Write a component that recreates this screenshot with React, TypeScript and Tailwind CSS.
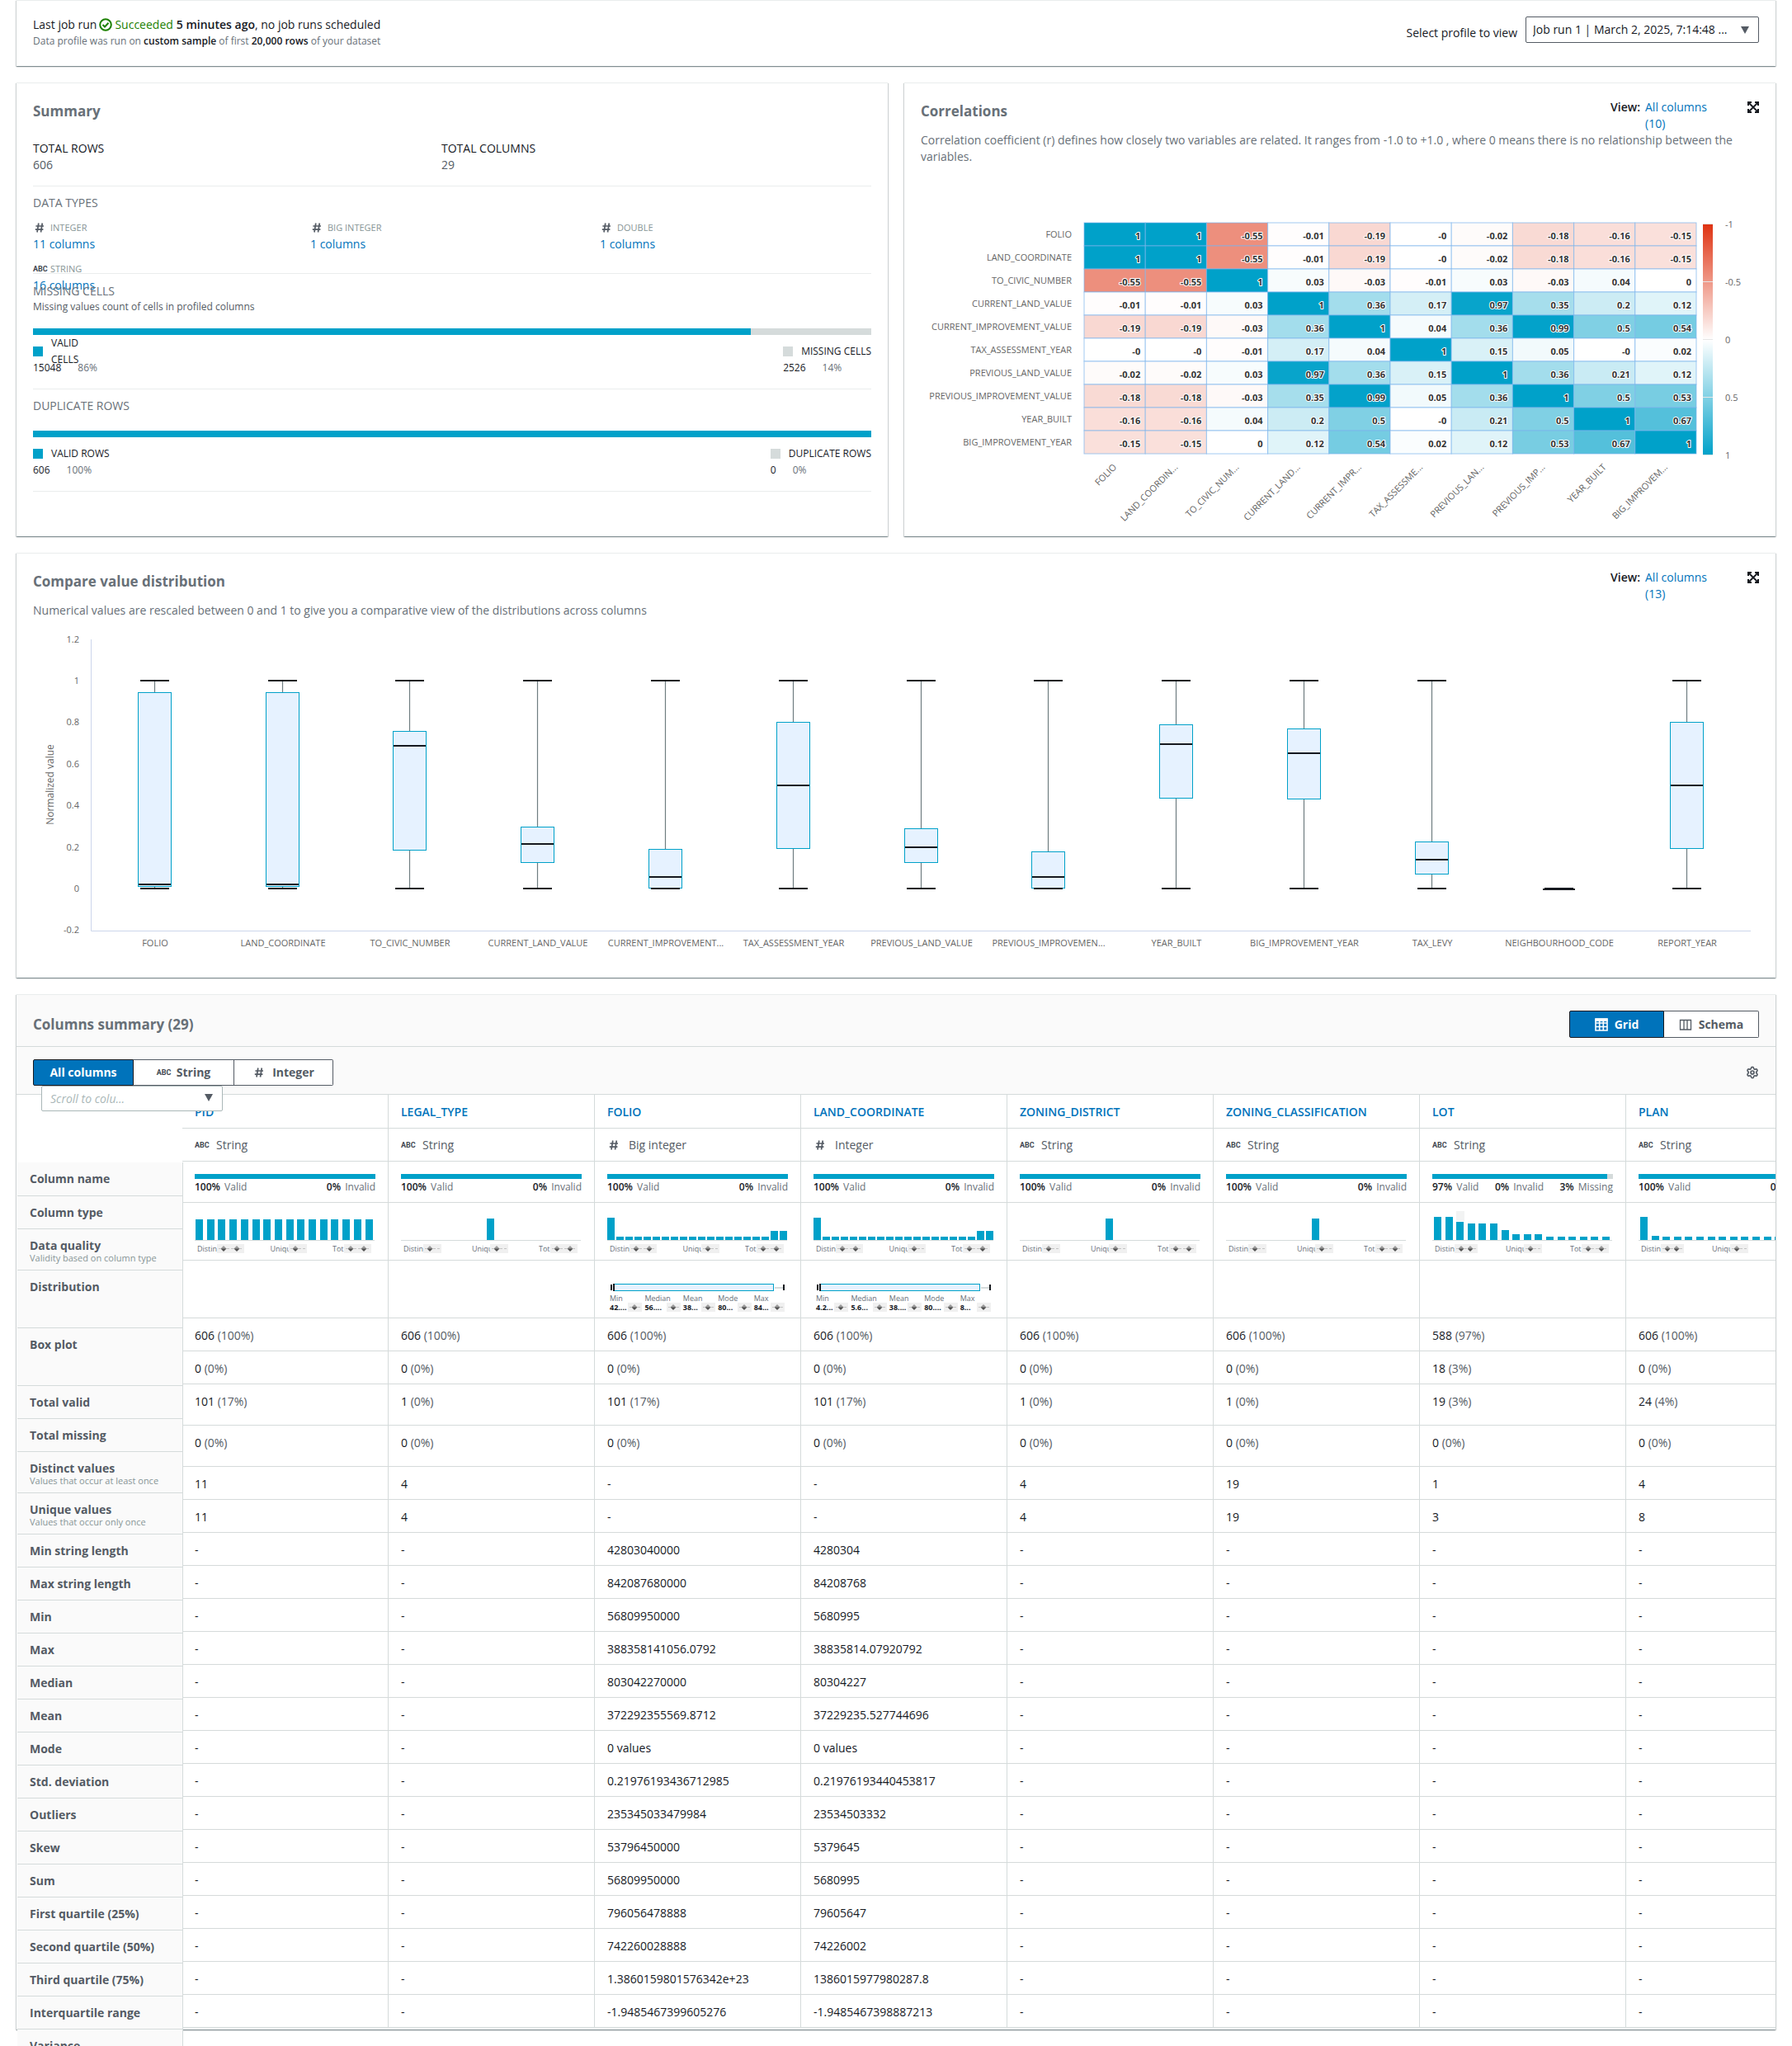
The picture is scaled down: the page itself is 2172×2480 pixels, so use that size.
import React from "react";
import { Settings } from "lucide-react";

const CARD =
  "border-t border-[#eaeded] bg-white shadow-[0_1px_1px_0_rgba(0,28,36,0.3),1px_1px_1px_0_rgba(0,28,36,0.15),-1px_1px_1px_0_rgba(0,28,36,0.15)]";

const BLUE = "#00a1c9";

/* ---------- Icons ---------- */

function HashIcon() {
  return (
    <svg width="16" height="16" viewBox="0 0 16 16" className="shrink-0" aria-hidden="true">
      <path d="M6.8 2.5L5 13.5M11.3 2.5L9.5 13.5M3.4 6H13M2.8 10.2H12.4" stroke="#545b64" strokeWidth="1.7" fill="none" />
    </svg>
  );
}

function AbcIcon() {
  return (
    <span
      aria-hidden="true"
      className="w-4 shrink-0 whitespace-nowrap font-['Liberation_Sans_Narrow','Roboto','Liberation_Sans',sans-serif] text-[9px] leading-5 font-bold text-[#414750]"
    >
      ABC
    </span>
  );
}

function ExpandIcon() {
  return (
    <svg width="14" height="14" viewBox="0 0 14 14" aria-hidden="true">
      <path d="M1 5V1H5M9 1H13V5M13 9V13H9M5 13H1V9" stroke="#16191f" strokeWidth="2" fill="none" />
      <path d="M2 2L12 12M12 2L2 12" stroke="#16191f" strokeWidth="1.8" />
    </svg>
  );
}

function Caret({ className }: { className: string }) {
  return (
    <svg width="10" height="9" viewBox="0 0 10 9" className={className} aria-hidden="true">
      <path d="M0 0H10L5 9Z" fill="#545b64" />
    </svg>
  );
}

/* ---------- Top bar ---------- */

function JobBar() {
  return (
    <section className={`${CARD} flex h-20 items-start justify-between px-5 pt-[19px]`}>
      <div>
        <p className="flex items-center text-sm leading-5">
          Last job run
          <svg width="16" height="16" viewBox="0 0 16 16" className="mx-[3px]" aria-hidden="true">
            <circle cx="8" cy="8" r="6.8" fill="none" stroke="#1d8102" strokeWidth="2" />
            <path d="M4.5 8L7 10.5L11.5 5.8" fill="none" stroke="#1d8102" strokeWidth="2" />
          </svg>
          <span className="mr-1 text-[#1d8102]">Succeeded</span>
          <b className="font-semibold">5 minutes ago</b>, no job runs scheduled
        </p>
        <p className="text-xs leading-5 text-[#687078]">
          Data profile was run on <b className="font-semibold text-[#16191f]">custom sample</b> of first{" "}
          <b className="font-semibold text-[#16191f]">20,000 rows</b> of your dataset
        </p>
      </div>
      <div className="flex items-center">
        <label htmlFor="profile" className="mt-2 mr-2.5 text-sm">
          Select profile to view
        </label>
        <div className="relative">
          <select
            id="profile"
            className="h-8 w-[283px] appearance-none rounded-xs border border-[#545b64] bg-white pr-8 pl-2 text-sm"
          >
            <option>Job run 1 | March 2, 2025, 7:14:48 ...</option>
          </select>
          <Caret className="pointer-events-none absolute top-3 right-3" />
        </div>
      </div>
    </section>
  );
}

/* ---------- Summary ---------- */

function TypeCount({ icon, name, count }: { icon: React.ReactNode; name: string; count: string }) {
  return (
    <div className="h-[50px] text-sm leading-5">
      <div className="flex items-center gap-[5px] text-[11px] leading-5 text-[#879596]">
        {icon}
        {name}
      </div>
      <a href="#columns" className="text-[#0073bb]">
        {count}
      </a>
    </div>
  );
}

function Legend({ color, label, value, pct, narrow }: { color: string; label: string; value: string; pct: string; narrow?: boolean }) {
  return (
    <div className="text-xs leading-5">
      <div className="flex h-5 items-center gap-2.5">
        <span className={`size-3 shrink-0 ${color}`} />
        <span className={narrow ? "w-10" : ""}>{label}</span>
      </div>
      <div className="flex h-5 gap-5">
        <span>{value}</span>
        <span className="text-[#687078]">{pct}</span>
      </div>
    </div>
  );
}

const VALID_CELLS = 15048;
const MISSING_CELLS = 2526;

function Summary() {
  return (
    <section className={`${CARD} h-[550px] px-5 pt-[19px]`}>
      <h2 className="h-[50px] text-[17px] leading-[30px] font-bold text-[#687078]">Summary</h2>
      <div className="grid h-14 grid-cols-[495fr_521fr] border-b border-[#eaeded] text-sm leading-5">
        <div>
          <div>TOTAL ROWS</div>
          <div className="text-[#545b64]">606</div>
        </div>
        <div>
          <div>TOTAL COLUMNS</div>
          <div className="text-[#545b64]">29</div>
        </div>
      </div>
      <div className="h-[106px] border-b border-[#eaeded] pt-2.5">
        <h3 className="mb-2.5 text-sm leading-5 text-[#687078]">DATA TYPES</h3>
        <div className="grid grid-cols-[336fr_351fr_329fr]">
          <TypeCount icon={<HashIcon />} name="INTEGER" count="11 columns" />
          <TypeCount icon={<HashIcon />} name="BIG INTEGER" count="1 columns" />
          <TypeCount icon={<HashIcon />} name="DOUBLE" count="1 columns" />
          <TypeCount icon={<AbcIcon />} name="STRING" count="16 columns" />
        </div>
      </div>
      <div className="h-[140px] border-b border-[#eaeded] pt-3">
        <h3 className="text-sm leading-[18px] text-[#687078]">MISSING CELLS</h3>
        <p className="mb-4 text-xs leading-5 text-[#545b64]">Missing values count of cells in profiled columns</p>
        <div className="mb-2.5 flex h-2">
          <div className="bg-[#00a1c9]" style={{ width: `${(100 * VALID_CELLS) / (VALID_CELLS + MISSING_CELLS)}%` }} />
          <div className="flex-1 bg-[#d5dbdb]" />
        </div>
        <div className="flex justify-between">
          <Legend color="bg-[#00a1c9]" label="VALID CELLS" value={`${VALID_CELLS}`} pct="86%" narrow />
          <Legend color="bg-[#d5dbdb]" label="MISSING CELLS" value={`${MISSING_CELLS}`} pct="14%" />
        </div>
      </div>
      <div className="h-[124px] border-b border-[#eaeded] pt-2.5">
        <h3 className="mb-5 text-sm leading-5 text-[#687078]">DUPLICATE ROWS</h3>
        <div className="mb-2.5 h-2 bg-[#00a1c9]" />
        <div className="flex justify-between">
          <Legend color="bg-[#00a1c9]" label="VALID ROWS" value="606" pct="100%" />
          <Legend color="bg-[#d5dbdb]" label="DUPLICATE ROWS" value="0" pct="0%" />
        </div>
      </div>
    </section>
  );
}

/* ---------- Shared chart header ---------- */

function ChartHeader({ title, count }: { title: string; count: string }) {
  return (
    <div className="flex h-[50px] items-start">
      <h2 className="flex-1 text-[17px] leading-[30px] font-bold text-[#687078]">{title}</h2>
      <span className="mr-1.5 text-sm leading-5 font-semibold">View:</span>
      <a href="#view" className="mr-[38px] w-[86px] text-sm leading-5 text-[#0073bb]">
        All columns {count}
      </a>
      <button type="button" aria-label={`Expand ${title}`} className="mt-[3px] flex">
        <ExpandIcon />
      </button>
    </div>
  );
}

/* ---------- Correlations ---------- */

const CORR_NAMES = [
  "FOLIO", "LAND_COORDINATE", "TO_CIVIC_NUMBER", "CURRENT_LAND_VALUE", "CURRENT_IMPROVEMENT_VALUE",
  "TAX_ASSESSMENT_YEAR", "PREVIOUS_LAND_VALUE", "PREVIOUS_IMPROVEMENT_VALUE", "YEAR_BUILT", "BIG_IMPROVEMENT_YEAR",
];
const CORR_SHORT = [
  "FOLIO", "LAND_COORDIN...", "TO_CIVIC_NUM...", "CURRENT_LAND...", "CURRENT_IMPR...",
  "TAX_ASSESSME...", "PREVIOUS_LAN...", "PREVIOUS_IMP...", "YEAR_BUILT", "BIG_IMPROVEM...",
];
const CORR = [
  "1 1 -0.55 -0.01 -0.19 -0 -0.02 -0.18 -0.16 -0.15",
  "1 1 -0.55 -0.01 -0.19 -0 -0.02 -0.18 -0.16 -0.15",
  "-0.55 -0.55 1 0.03 -0.03 -0.01 0.03 -0.03 0.04 0",
  "-0.01 -0.01 0.03 1 0.36 0.17 0.97 0.35 0.2 0.12",
  "-0.19 -0.19 -0.03 0.36 1 0.04 0.36 0.99 0.5 0.54",
  "-0 -0 -0.01 0.17 0.04 1 0.15 0.05 -0 0.02",
  "-0.02 -0.02 0.03 0.97 0.36 0.15 1 0.36 0.21 0.12",
  "-0.18 -0.18 -0.03 0.35 0.99 0.05 0.36 1 0.5 0.53",
  "-0.16 -0.16 0.04 0.2 0.5 -0 0.21 0.5 1 0.67",
  "-0.15 -0.15 0 0.12 0.54 0.02 0.12 0.53 0.67 1",
].map((r) => r.split(" "));

function heat(text: string) {
  const v = Number(text);
  const end = v < 0 ? [223, 51, 18] : [0, 161, 201];
  const t = Math.abs(v);
  const [r, g, b] = end.map((c) => Math.round(255 + (c - 255) * t));
  return `rgb(${r},${g},${b})`;
}

function Heatmap() {
  const x0 = 198;
  const y0 = 60;
  const cw = 74.2;
  const ch = 28;
  return (
    <svg viewBox="0 0 1016 430" className="block h-auto w-full" role="img" aria-label="Correlation heat map">
      <defs>
        <linearGradient id="scale" x1="0" y1="0" x2="0" y2="1">
          <stop offset="0" stopColor="#df3312" />
          <stop offset="0.5" stopColor="#ffffff" />
          <stop offset="1" stopColor={BLUE} />
        </linearGradient>
      </defs>
      {CORR.map((row, r) =>
        row.map((v, c) => (
          <rect
            key={`${r}-${c}`}
            x={x0 + c * cw}
            y={y0 + r * ch}
            width={cw}
            height={ch}
            fill={heat(v)}
            stroke="#7cb5ec"
            strokeOpacity="0.7"
          />
        )),
      )}
      {CORR.map((row, r) =>
        row.map((v, c) => (
          <text
            key={`${r}-${c}`}
            x={x0 + (c + 1) * cw - 6}
            y={y0 + r * ch + 20}
            textAnchor="end"
            fontSize="11"
            fontWeight="700"
            fill="#333333"
            stroke="#ffffff"
            strokeWidth="2"
            strokeLinejoin="round"
            paintOrder="stroke"
          >
            {v}
          </text>
        )),
      )}
      {CORR_NAMES.map((n, i) => (
        <text key={n} x={x0 - 15} y={y0 + i * ch + 18} textAnchor="end" fontSize="11" fill="#666666">
          {n}
        </text>
      ))}
      {CORR_SHORT.map((n, i) => {
        const x = x0 + i * cw + 40;
        return (
          <text key={n} x={x} y="357" textAnchor="end" fontSize="11" fill="#666666" transform={`rotate(-45 ${x} 357)`}>
            {n}
          </text>
        );
      })}
      <rect x="948" y="62" width="12" height="280" fill="url(#scale)" />
      {["-1", "-0.5", "0", "0.5", "1"].map((t, i) => (
        <g key={t}>
          <rect x="948" y={61 + i * 70} width="12" height="1" fill="#e6e6e6" />
          <text x="975" y={66 + i * 70} fontSize="11" fill="#666666">
            {t}
          </text>
        </g>
      ))}
    </svg>
  );
}

function Correlations() {
  return (
    <section className={`${CARD} h-[550px] px-5 pt-[19px]`}>
      <ChartHeader title="Correlations" count="(10)" />
      <p className="mt-[-10px] mb-2.5 min-h-10 pr-6 text-sm leading-5 text-[#687078]">
        Correlation coefficient (r) defines how closely two variables are related. It ranges from -1.0 to +1.0 , where 0 means there is
        no relationship between the variables.
      </p>
      <Heatmap />
    </section>
  );
}

/* ---------- Value distribution ---------- */

type Box = [name: string, q1: number, median: number, q3: number];
const BOXES: Box[] = [
  ["FOLIO", 0.01, 0.018, 0.943],
  ["LAND_COORDINATE", 0.01, 0.018, 0.943],
  ["TO_CIVIC_NUMBER", 0.185, 0.687, 0.757],
  ["CURRENT_LAND_VALUE", 0.128, 0.216, 0.297],
  ["CURRENT_IMPROVEMENT...", 0.005, 0.056, 0.19],
  ["TAX_ASSESSMENT_YEAR", 0.196, 0.497, 0.801],
  ["PREVIOUS_LAND_VALUE", 0.128, 0.198, 0.288],
  ["PREVIOUS_IMPROVEMEN...", 0.005, 0.056, 0.18],
  ["YEAR_BUILT", 0.438, 0.695, 0.788],
  ["BIG_IMPROVEMENT_YEAR", 0.434, 0.651, 0.768],
  ["TAX_LEVY", 0.07, 0.139, 0.226],
  ["NEIGHBOURHOOD_CODE", 0, 0, 0],
  ["REPORT_YEAR", 0.196, 0.497, 0.801],
];

function BoxPlots() {
  const left = 70;
  const right = 2082;
  const pitch = (right - left) / BOXES.length;
  const y = (v: number) => Math.round(317 - v * 252);
  return (
    <svg viewBox="0 0 2092 405" className="block h-auto w-full" role="img" aria-label="Box plots of normalized values">
      <path d={`M${left + 0.5} 15V368.5H${right}`} fill="none" stroke="#ccd6eb" />
      {[1.2, 1, 0.8, 0.6, 0.4, 0.2, 0, -0.2].map((t) => (
        <text key={t} x="56" y={y(t) + 4} textAnchor="end" fontSize="11" fill="#666666">
          {t}
        </text>
      ))}
      <text x="25" y="191" textAnchor="middle" fontSize="12" fill="#666666" transform="rotate(-90 25 191)">
        Normalized value
      </text>
      {BOXES.map(([name, q1, med, q3], i) => {
        const cx = Math.floor(left + pitch * (i + 0.5));
        const flat = q3 === 0;
        return (
          <g key={name}>
            {!flat && (
              <>
                <path d={`M${cx + 0.5} ${y(1)}V${y(0)}`} stroke="#6f7d80" strokeWidth="1.2" />
                <rect
                  x={cx - 19.5}
                  y={y(q3) + 0.5}
                  width="40"
                  height={y(q1) - y(q3)}
                  fill="#e6f2ff"
                  stroke={BLUE}
                />
                <path d={`M${cx - 17} ${y(1)}H${cx + 18}`} stroke="#16191f" strokeWidth="2" />
              </>
            )}
            <path d={`M${cx - 17} ${y(0)}H${cx + 18}`} stroke="#16191f" strokeWidth="2" />
            <path d={`M${cx - 19} ${flat ? y(0) + 1 : y(med)}H${cx + 20}`} stroke="#16191f" strokeWidth="2" />
            <text x={cx + 1} y="387" textAnchor="middle" fontSize="11" fill="#666666">
              {name}
            </text>
          </g>
        );
      })}
    </svg>
  );
}

function Distribution() {
  return (
    <section className={`${CARD} h-[515px] px-5 pt-[19px]`}>
      <ChartHeader title="Compare value distribution" count="(13)" />
      <p className="mt-[-10px] mb-2.5 text-sm leading-5 text-[#687078]">
        Numerical values are rescaled between 0 and 1 to give you a comparative view of the distributions across columns
      </p>
      <BoxPlots />
    </section>
  );
}

/* ---------- Columns summary ---------- */

type Kind = "String" | "Big integer" | "Integer";
interface Column {
  name: string;
  kind: Kind;
  valid: number;
  missing: number;
  bars: number[];
  barStart: number;
  pitch: number;
  spinners: "wide" | "one" | "tight";
  values: string[];
  box?: string[];
}

const many = (n: number, v: number) => Array<number>(n).fill(v);
const dashes = Array<string>(15).fill("-");
const full = { valid: 100, missing: 0 };

const COLUMNS: Column[] = [
  { name: "PID", kind: "String", ...full, bars: many(16, 25), barStart: 1, pitch: 13.7, spinners: "wide",
    values: ["606 (100%)", "0 (0%)", "101 (17%)", "0 (0%)", "11", "11", ...dashes] },
  { name: "LEGAL_TYPE", kind: "String", ...full, bars: [26], barStart: 104, pitch: 0, spinners: "one",
    values: ["606 (100%)", "0 (0%)", "1 (0%)", "0 (0%)", "4", "4", ...dashes] },
  { name: "FOLIO", kind: "Big integer", ...full, bars: [27, ...many(17, 4), 11, 11], barStart: 0, pitch: 11, spinners: "wide",
    values: ["606 (100%)", "0 (0%)", "101 (17%)", "0 (0%)", "-", "-", "42803040000", "842087680000", "56809950000", "388358141056.0792",
      "803042270000", "372292355569.8712", "0 values", "0.21976193436712985", "235345033479984", "53796450000", "56809950000",
      "796056478888", "742260028888", "1.3860159801576342e+23", "-1.9485467399605276"],
    box: ["42....", "56....", "38...", "80...", "84..."] },
  { name: "LAND_COORDINATE", kind: "Integer", ...full, bars: [27, ...many(17, 4), 11, 11], barStart: 0, pitch: 11, spinners: "wide",
    values: ["606 (100%)", "0 (0%)", "101 (17%)", "0 (0%)", "-", "-", "4280304", "84208768", "5680995", "38835814.07920792",
      "80304227", "37229235.527744696", "0 values", "0.21976193440453817", "23534503332", "5379645", "5680995",
      "79605647", "74226002", "1386015977980287.8", "-1.9485467398887213"],
    box: ["4.2...", "5.6...", "38....", "80....", "8..."] },
  { name: "ZONING_DISTRICT", kind: "String", ...full, bars: [26], barStart: 104, pitch: 0, spinners: "one",
    values: ["606 (100%)", "0 (0%)", "1 (0%)", "0 (0%)", "4", "4", ...dashes] },
  { name: "ZONING_CLASSIFICATION", kind: "String", ...full, bars: [26], barStart: 104, pitch: 0, spinners: "one",
    values: ["606 (100%)", "0 (0%)", "1 (0%)", "0 (0%)", "19", "19", ...dashes] },
  { name: "LOT", kind: "String", valid: 97, missing: 3, bars: [28, 28, 22, 20, 20, 20, 12, 7, 7, 7, ...many(6, 4)], barStart: 2, pitch: 13.6,
    spinners: "tight", values: ["588 (97%)", "18 (3%)", "19 (3%)", "0 (0%)", "1", "3", ...dashes] },
  { name: "PLAN", kind: "String", ...full, bars: [28, 5, ...many(14, 4)], barStart: 2, pitch: 13.6, spinners: "tight",
    values: ["606 (100%)", "0 (0%)", "24 (4%)", "0 (0%)", "4", "8", ...dashes] },
];

const CELL = "border-r border-b border-[#d5dbdb] px-[15px] text-left align-top";

function Spinners({ width, at }: { width: number; at: number[] }) {
  return (
    <svg width={width} height="11" viewBox={`0 0 ${width} 11`} className="shrink-0" aria-hidden="true">
      <rect width={width} height="11" fill="#f0f0f0" />
      <path d={`M2 5.5H${width - 2}`} stroke="#c4c4c4" strokeDasharray="13 2" />
      {at.map((x) => (
        <g key={x}>
          <path d={`M${x - 3} 5L${x} 2L${x + 3} 5Z`} fill="#9a9a9a" />
          <path d={`M${x - 3} 6L${x} 9L${x + 3} 6Z`} fill="#505050" />
          <path d={`M${x - 3} 5.5H${x + 3}`} stroke="#777777" />
        </g>
      ))}
    </svg>
  );
}

function Share({ value, label }: { value: number; label: string }) {
  return (
    <span>
      <b className="mr-0.5 font-semibold text-[#16191f]">{value}%</b> {label}
    </span>
  );
}

function Quality({ col }: { col: Column }) {
  return (
    <>
      <div className="flex h-1.5">
        <div className="bg-[#00a1c9]" style={{ width: `${col.valid}%` }} />
        <div className="flex-1 bg-[#d5dbdb]" />
      </div>
      <div className="flex justify-between text-xs leading-5 text-[#687078]">
        <Share value={col.valid} label="Valid" />
        <Share value={0} label="Invalid" />
        {col.missing > 0 && <Share value={col.missing} label="Missing" />}
      </div>
    </>
  );
}

function Histogram({ col }: { col: Column }) {
  return (
    <>
      <svg width="218" height="36" viewBox="0 0 218 36" className="block" aria-hidden="true">
        {col.name === "LOT" && <rect x="29" y="0" width="10" height="12" fill="#f2f3f3" />}
        {col.bars.map((h, i) => (
          <rect key={i} x={Math.round(col.barStart + i * col.pitch)} y={35 - h} width="9" height={h} fill={BLUE} />
        ))}
        <rect x="0" y="35" width="218" height="1" fill="#d5dbdb" />
      </svg>
      <div className="mt-[3px] flex items-center justify-between pr-[5px] pl-[3px] text-[9px] leading-[13px] text-[#687078]">
        <span className="flex items-center">
          <span className="w-6 overflow-hidden whitespace-nowrap">Distin</span>
          {col.spinners === "wide" && <Spinners width={33} at={[8, 24]} />}
          {col.spinners === "one" && <Spinners width={22} at={[8]} />}
          {col.spinners === "tight" && <Spinners width={28} at={[8, 19]} />}
        </span>
        <span className="flex items-center">
          <span className="w-[22px] overflow-hidden whitespace-nowrap">Uniqu</span>
          <Spinners width={22} at={[8]} />
        </span>
        <span className="flex items-center">
          <span className="w-3.5 overflow-hidden whitespace-nowrap">Tot</span>
          <Spinners width={33} at={[8, 24]} />
        </span>
      </div>
    </>
  );
}

const STAT_NAMES = ["Min", "Median", "Mean", "Mode", "Max"];

function MiniBox({ stats }: { stats: string[] }) {
  return (
    <>
      <svg width="219" height="9" viewBox="0 0 219 9" className="block" aria-hidden="true">
        <path d="M203 5H213" stroke="#d5dbdb" strokeWidth="2" />
        <rect x="8.5" y="0.5" width="193" height="8" fill="#e6f2ff" stroke={BLUE} />
        <path d="M5 1V8M214 1V8" stroke="#16191f" strokeWidth="2" />
        <path d="M8 0V9" stroke="#16191f" strokeWidth="2" />
      </svg>
      <div className="mt-[3px] grid grid-cols-[39fr_43fr_39fr_40fr_37fr] gap-x-[3px] pr-1 pl-[3px] text-[9px] leading-[11px]">
        {STAT_NAMES.map((n, i) => (
          <div key={n} className="min-w-0">
            <div className="text-[#687078]">{n}</div>
            <div className="flex items-center justify-between">
              <b className="w-[22px] font-bold whitespace-nowrap">{stats[i]}</b>
              <Spinners width={17} at={[8]} />
            </div>
          </div>
        ))}
      </div>
    </>
  );
}

function CellValue({ text }: { text: string }) {
  const cut = text.indexOf(" (");
  if (cut < 0) return <>{text}</>;
  return (
    <>
      {text.slice(0, cut)}
      <span className="text-[#545b64]">{text.slice(cut)}</span>
    </>
  );
}

const LABELS: [string, string, string?][] = [
  ["Column name", "h-[41px]"],
  ["Column type", "h-10"],
  ["Data quality", "h-[50px]", "Validity based on column type"],
  ["Distribution", "h-[70px]"],
  ["Box plot", "h-[70px]"],
  ["Total valid", "h-10"],
  ["Total missing", "h-10"],
  ["Distinct values", "h-[50px]", "Values that occur at least once"],
  ["Unique values", "h-[50px]", "Values that occur only once"],
  ...[
    "Min string length", "Max string length", "Min", "Max", "Median", "Mean", "Mode", "Std. deviation", "Outliers", "Skew", "Sum",
    "First quartile (25%)", "Second quartile (50%)", "Third quartile (75%)", "Interquartile range", "Variance",
  ].map((n): [string, string] => [n, "h-10"]),
];

function LabelTable() {
  return (
    <table className="relative z-10 mt-[82px] -mr-px mb-[-60px] ml-px w-[201px] shrink-0 table-fixed border-separate border-spacing-0 bg-[#fafafa]">
      <tbody>
        {LABELS.map(([name, height, hint]) => (
          <tr key={name}>
            <th
              scope="row"
              className={`${height} border-r border-b border-[#d5dbdb] pt-2.5 pl-[15px] text-left align-top text-sm leading-5 font-bold whitespace-nowrap text-[#545b64]`}
            >
              {name}
              {hint && <div className="text-[11px] leading-[10px] font-normal text-[#879596]">{hint}</div>}
            </th>
          </tr>
        ))}
      </tbody>
    </table>
  );
}

function DataTable() {
  return (
    <div className="min-w-0 flex-1 overflow-hidden">
      <table className="w-[2000px] table-fixed border-separate border-spacing-0 text-sm leading-5">
        <thead>
          <tr>
            {COLUMNS.map((c) => (
              <th key={c.name} scope="col" className={`${CELL} h-[41px] pt-[11px] font-semibold`}>
                <a href="#columns" className="text-[#0073bb]">
                  {c.name}
                </a>
              </th>
            ))}
          </tr>
        </thead>
        <tbody>
          <tr>
            {COLUMNS.map((c) => (
              <td key={c.name} className={`${CELL} h-10 pt-2.5 text-[#545b64]`}>
                <div className="flex items-center gap-2.5">
                  {c.kind === "String" ? <AbcIcon /> : <HashIcon />}
                  {c.kind}
                </div>
              </td>
            ))}
          </tr>
          <tr>
            {COLUMNS.map((c) => (
              <td key={c.name} className={`${CELL} h-[50px] pt-[15px]`}>
                <Quality col={c} />
              </td>
            ))}
          </tr>
          <tr>
            {COLUMNS.map((c) => (
              <td key={c.name} className={`${CELL} h-[70px] pt-2.5`}>
                <Histogram col={c} />
              </td>
            ))}
          </tr>
          <tr>
            {COLUMNS.map((c) => (
              <td key={c.name} className={`${CELL} h-[70px] pt-7`}>
                {c.box && <MiniBox stats={c.box} />}
              </td>
            ))}
          </tr>
          {COLUMNS[0].values.map((_, r) => (
            <tr key={r}>
              {COLUMNS.map((c) => (
                <td key={c.name} className={`${CELL} pt-[11px] ${r === 2 || r === 3 ? "h-[50px]" : "h-10"}`}>
                  <CellValue text={c.values[r]} />
                </td>
              ))}
            </tr>
          ))}
        </tbody>
      </table>
    </div>
  );
}

function ColumnsSummary() {
  return (
    <section id="columns" className={`${CARD} pb-0.5`}>
      <div className="flex h-[63px] items-start justify-between border-b border-[#d5dbdb] bg-[#fafafa] px-5 pt-[19px]">
        <h2 className="text-[17px] leading-[33px] font-bold text-[#687078]">Columns summary (29)</h2>
        <div className="flex h-[33px] text-sm font-bold">
          <button
            type="button"
            className="flex w-[115px] items-center justify-center gap-2 rounded-l-xs border border-[#16191f] bg-[#0073bb] text-white"
          >
            <svg width="16" height="16" viewBox="0 0 16 16" aria-hidden="true">
              <path d="M1 1H15V15H1ZM1 6H15M1 10.5H15M5.7 4V15M10.3 4V15" fill="none" stroke="#ffffff" strokeWidth="1.6" />
              <rect x="0.5" y="0.5" width="15" height="3.5" fill="#ffffff" />
            </svg>
            Grid
          </button>
          <button
            type="button"
            className="flex w-[115px] items-center justify-center gap-2 rounded-r-xs border border-l-0 border-[#545b64] bg-white text-[#545b64]"
          >
            <svg width="16" height="16" viewBox="0 0 16 16" aria-hidden="true">
              <path d="M1.5 2.5H14.5V14H1.5ZM6 2.5V14M10 2.5V14" fill="none" stroke="#545b64" strokeWidth="1.3" />
            </svg>
            Schema
          </button>
        </div>
      </div>
      <div className="relative flex h-[58px] items-start justify-between border-b border-[#d5dbdb] bg-[#fafafa] px-5 pt-[15px]">
        <div className="flex h-8 text-sm font-bold text-[#545b64]">
          <button type="button" className="w-[122px] rounded-l-xs border border-[#16191f] bg-[#0073bb] text-white">
            All columns
          </button>
          <button type="button" className="flex w-[122px] items-center justify-center gap-2 border-y border-r border-[#545b64] bg-white">
            <AbcIcon />
            String
          </button>
          <button
            type="button"
            className="flex w-[120px] items-center justify-center gap-2 rounded-r-xs border border-l-0 border-[#545b64] bg-white"
          >
            <HashIcon />
            Integer
          </button>
        </div>
        <button type="button" aria-label="Preferences" className="mt-2">
          <Settings size={16} color="#545b64" strokeWidth={2.5} />
        </button>
        <div className="absolute top-[47px] left-[30px] z-20">
          <select
            aria-label="Scroll to column"
            className="block h-[31px] w-[220px] appearance-none rounded-xs border border-[#aab7b8] bg-white pr-8 pl-2.5 text-sm text-[#aab7b8] italic"
          >
            <option>Scroll to colu...</option>
          </select>
          <Caret className="pointer-events-none absolute top-2.5 right-3" />
        </div>
      </div>
      <div className="flex items-start">
        <LabelTable />
        <DataTable />
      </div>
    </section>
  );
}

export default function App() {
  return (
    <main className="flex flex-col gap-5 overflow-hidden bg-white px-5 pb-5 font-['Open_Sans','Noto_Sans',sans-serif] text-[#16191f]">
      <JobBar />
      <div className="grid grid-cols-2 gap-5">
        <Summary />
        <Correlations />
      </div>
      <Distribution />
      <ColumnsSummary />
    </main>
  );
}
